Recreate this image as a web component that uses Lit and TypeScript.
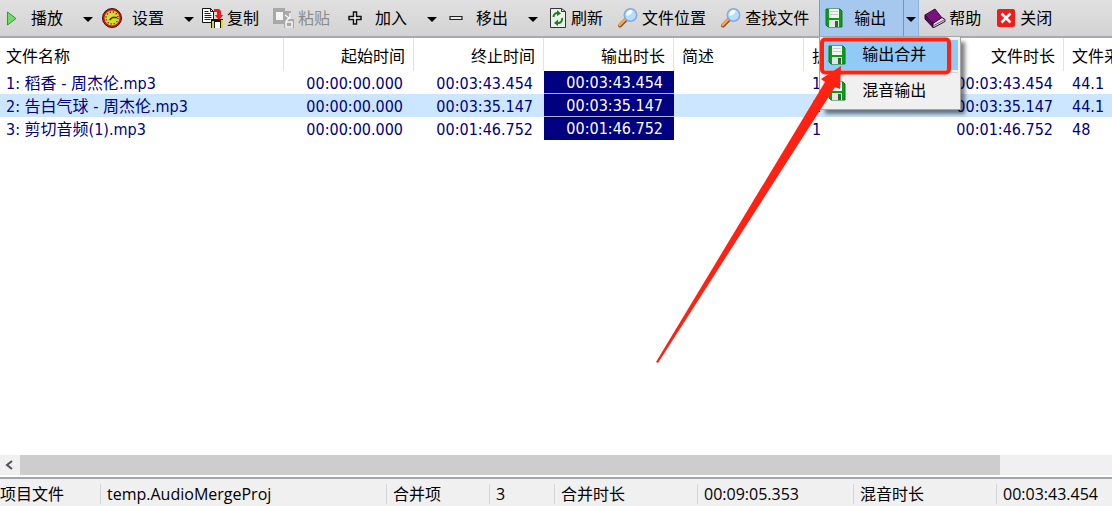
import { LitElement, html, svg, css } from "lit";
import { customElement } from "lit/decorators.js";
import { classMap } from "lit/directives/class-map.js";

const icon = (body: unknown, w = 22, h = 20) =>
  html`<svg class="icon" width=${w} height=${h} viewBox="0 0 ${w} ${h}" aria-hidden="true">${body}</svg>`;

const saveBody = svg`
  <path d="M3 1h14l2 2v16H5l-2-2z" fill="#0f9a1c"/>
  <path d="M3 1h14l2 2v16H5l-2-2z" fill="none" stroke="#0b7a14"/>
  <rect x="6" y="1" width="10" height="9" fill="#f4f4f4"/>
  <path d="M7 3.500h8M7 6.500h8" stroke="#c8c8c8"/>
  <rect x="6" y="12" width="10" height="7" fill="#e4e4ea"/>
  <rect x="12" y="13" width="3" height="6" fill="#2a6a2c"/>`;

const magBody = svg`
  <path d="M3 17.500l5.500-5.500" stroke="#8a5030" stroke-width="4" stroke-linecap="round"/>
  <path d="M2.500 17l5.500-5.500" stroke="#f7a64a" stroke-width="2.500" stroke-linecap="round"/>
  <circle cx="13.500" cy="7" r="6.200" fill="#b4dffa" stroke="#8aa6dc" stroke-width="1.500"/>
  <path d="M9.500 8a4.500 4.500 0 0 1 6-5.500c0 3-3 5-6 5.500z" fill="#f4fbff"/>`;

const icons: Record<string, unknown> = {
  play: svg`<path d="M7.500 4l8.500 6.500-8.500 6.500z" fill="#6fdc66" stroke="#23a02a"/>`,
  clock: svg`
    <circle cx="11" cy="10" r="8.500" fill="#dede1e" stroke="#e01010" stroke-width="2"/>
    <circle cx="11" cy="10" r="9.500" fill="none" stroke="#3a1010" stroke-width="1"/>
    <circle cx="11" cy="10" r="6" fill="none" stroke="#3434a0" stroke-width="1.500" stroke-dasharray="1.200 1.950"/>
    <path d="M16 9.500h-4.500l-3 2.500" fill="none" stroke="#30300a" stroke-width="1.500"/>`,
  copy: svg`
    <path d="M.500 .500h8l3 3v11h-11z" fill="#fff" stroke="#111"/>
    <path d="M8.500 .500v3h3" fill="none" stroke="#111"/>
    <path d="M2.500 3.500h4M2.500 5.500h6M2.500 7.500h7M2.500 9.500h7M2.500 11.500h6" stroke="#222"/>
    <path d="M12 1h5l2 2v4h2l-4 5-4-5h2V4h-3z" fill="#f01818"/>
    <path d="M9 11h12v9H9z" fill="#181808"/>
    <path d="M10 13h2v7h-2zM19 12h2v8h-2z" fill="#e0d820"/>
    <path d="M13 14h5v6h-5z" fill="#fff"/>
    <path d="M13 7h8l-4 5z" fill="#f01818"/>`,
  paste: svg`
    <path d="M0 0h12v3h6v8h3v9H11v-4H0z" fill="#a8a8a8"/>
    <path d="M3 4h7v8H3z" fill="#f4f4f4"/>
    <path d="M12 7l4 3-3 3M17 5v6M13 14v5h6v-5z" fill="none" stroke="#f8f8f8" stroke-width="1.500"/>`,
  plus: svg`<path d="M9.500 4h3v4.500h4.500v3h-4.500v4.500h-3v-4.500h-4.500v-3h4.500z" fill="#fff" stroke="#111" stroke-width="1.500"/>`,
  minus: svg`<path d="M5 8.500h12v3h-12z" fill="#e8e8e8" stroke="#222" stroke-width="1.200"/>`,
  refresh: svg`
    <path d="M4.500 .500h11l4 3v16h-15z" fill="#e8f2e8" stroke="#333"/>
    <path d="M15.500 .500v3h4" fill="none" stroke="#333"/>
    <path d="M7.500 9a4 4 0 0 1 4-4M16 10a4 4 0 0 1-4 5" fill="none" stroke="#1b7f22" stroke-width="2"/>
    <path d="M11 2l4 3.500-4 2.500zM12 11.500l-4 3.500 4 3z" fill="#1b7f22"/>`,
  mag: magBody,
  save: saveBody,
  book: svg`
    <path d="M1 7l10-6 7 9-9 6z" fill="#7d1080" stroke="#3b063d"/>
    <path d="M1 7v4l8 8.500v-4z" fill="#5a0a5e" stroke="#2b042d"/>
    <path d="M9 15.500l9-6 3 2v2l-12 6.500z" fill="#e8e0e8" stroke="#2b042d"/>
    <path d="M10 17.500l10-5.500" stroke="#555"/>`,
  close: svg`
    <rect x="2" y="1" width="18" height="18" rx="2" fill="#ee1c1c"/>
    <path d="M6.500 5.500l9 9M15.500 5.500l-9 9" stroke="#fff" stroke-width="2.500"/>`,
};

interface Tool { icon: string; label: string; split?: boolean; disabled?: boolean; open?: boolean }

const tools: Tool[] = [
  { icon: "play", label: "播放", split: true },
  { icon: "clock", label: "设置", split: true },
  { icon: "copy", label: "复制" },
  { icon: "paste", label: "粘贴", disabled: true },
  { icon: "plus", label: "加入", split: true },
  { icon: "minus", label: "移出", split: true },
  { icon: "refresh", label: "刷新" },
  { icon: "mag", label: "文件位置" },
  { icon: "mag", label: "查找文件" },
  { icon: "save", label: "输出", split: true, open: true },
  { icon: "book", label: "帮助" },
  { icon: "close", label: "关闭" },
];

const columns = [
  { label: "文件名称", num: false },
  { label: "起始时间", num: true },
  { label: "终止时间", num: true },
  { label: "输出时长", num: true },
  { label: "简述", num: false },
  { label: "折", num: false },
  { label: "文件时长", num: true },
  { label: "文件采", num: false },
];

const rows = [
  ["1: 稻香 - 周杰伦.mp3", "00:00:00.000", "00:03:43.454", "00:03:43.454", "", "1", "00:03:43.454", "44.1"],
  ["2: 告白气球 - 周杰伦.mp3", "00:00:00.000", "00:03:35.147", "00:03:35.147", "", "1", "00:03:35.147", "44.1"],
  ["3: 剪切音频(1).mp3", "00:00:00.000", "00:01:46.752", "00:01:46.752", "", "1", "00:01:46.752", "48"],
];

@customElement("tool-bar")
class ToolBar extends LitElement {
  static styles = css`
    :host { display: flex; gap: 1px; height: 36px; border-bottom: 2px solid #a9a9b1;
      background: linear-gradient(#e0e0e0, #d3d3d3); }
    button { border: 0; margin: 0; background: none; color: #000; font: inherit; text-align: left; white-space: nowrap; }
    .icon { flex: none; display: block; }
    .tool { display: flex; flex: none; position: relative; }
    .main { display: flex; align-items: center; gap: 3px; padding: 0 9px 0 4px; }
    .main span { padding-top: 2px; }
    .split .main { gap: 9px; padding: 0 17px 0 4px; }
    .tool:first-child .main { padding-left: 0; }
    .main:disabled { color: #8c8c8c; }
    .drop { width: 16px; padding: 2px 0 0; display: grid; place-items: center; }
    .open { background: #a6c8ee; box-shadow: inset 1px 0 #6aa0dc; }
    .open .drop { box-shadow: inset 1px 0 #5b9be0, inset -1px 0 #8ab4e4; }
    .menu { position: absolute; z-index: 2; top: 36px; left: 0; width: 142px; box-sizing: border-box;
      padding: 3px 2px; border: 1px solid #a5a5a5; background: #f0f0f0; box-shadow: 5px 5px 4px -1px #00000080; }
    .item { display: flex; align-items: center; gap: 14px; width: 100%; height: 30px; padding: 0 4px; }
    .item.current { background: #91c9f7; }
    .rule { height: 1px; margin: 2px 0 3px 34px; background: #d4d4d4; }
  `;
  render() {
    return tools.map((t) => html`
      <div class=${classMap({ tool: true, split: !!t.split, open: !!t.open })}>
        <button class="main" ?disabled=${t.disabled}>${icon(icons[t.icon])}<span>${t.label}</span></button>
        ${t.split ? html`<button class="drop" aria-label="${t.label} ▾">
          <svg width="10" height="5" viewBox="0 0 10 5"><path d="M0 0h10L5 5z" fill="#000"/></svg></button>` : ""}
        ${t.open ? html`<div class="menu" role="menu">
          <button class="item current" role="menuitem">${icon(icons.save)}<span>输出合并</span></button>
          <div class="rule"></div>
          <button class="item" role="menuitem">${icon(icons.save)}<span>混音输出</span></button>
        </div>` : ""}
      </div>`);
  }
}

@customElement("track-list")
class TrackList extends LitElement {
  static styles = css`
    :host { display: block; overflow: hidden; background: #fff; }
    table { border-collapse: separate; border-spacing: 0; table-layout: fixed; width: 1194px; }
    .name { width: 284px; }
    th, td { box-sizing: border-box; padding: 0 8px; font-weight: 400; text-align: left; white-space: nowrap; overflow: hidden; }
    th { height: 33px; border-right: 1px solid #e3e3e3; padding-top: 4px; }
    td { height: 23px; line-height: 21px; padding-top: 2px; padding-right: 11px; color: #000080; }
    th:first-child, td:first-child { padding-left: 6px; }
    .num { text-align: right; }
    .selected td { background: #cce6ff; }
    .length, .selected .length { background: #000080; color: #fff; border-bottom: 1px solid #b4b4c8; line-height: 20px; }
    tr:last-child .length { border-bottom-color: #000080; }
  `;
  render() {
    return html`<table>
      <colgroup><col class="name">${columns.slice(1).map(() => html`<col>`)}</colgroup>
      <thead><tr>${columns.map((c) => html`<th scope="col" class=${classMap({ num: c.num })}>${c.label}</th>`)}</tr></thead>
      <tbody>${rows.map((r, i) => html`<tr class=${classMap({ selected: i === 1 })}>
        ${r.map((v, j) => html`<td class=${classMap({ num: columns[j].num, length: j === 3 })}>${v}</td>`)}</tr>`)}</tbody>
    </table>`;
  }
}

@customElement("app-root")
class AppRoot extends LitElement {
  static styles = css`
    :host { display: flex; flex-direction: column; position: relative; min-height: 100vh; overflow: hidden;
      background: #fff; color: #000; font: 16px/20px "DejaVu Sans Condensed", "Noto Sans CJK SC", sans-serif; }
    track-list { flex: 1; }
    .scroll { display: flex; height: 20px; margin-bottom: 2px; background: #f0f0f0; }
    .back { width: 20px; padding: 0 3px 0 0; border: 0; background: none; display: grid; place-items: center; }
    .thumb { width: calc(90% - 21px); background: #cdcdcd; }
    .status { display: grid; align-items: center; box-sizing: border-box; height: 29px; padding-top: 2px;
      grid-template-columns: 101fr 286fr 103fr 65fr 143fr 156fr 143fr 115fr;
      border-top: 2px solid #a3a5ad; background: #f0f0f0;
      font-family: "Open Sans", "Noto Sans CJK SC", sans-serif; white-space: nowrap; overflow: hidden; }
    .cell { box-sizing: border-box; min-width: 0; padding-left: 6px; border-right: 1px solid #d5d5d5; }
    .cell:first-child { padding-left: 0; }
    .cell:last-child { border-right: 0; }
    .mark { position: absolute; z-index: 3; top: 36px; left: 650px; pointer-events: none; }
  `;
  render() {
    return html`
      <tool-bar role="toolbar"></tool-bar>
      <track-list></track-list>
      <div class="scroll">
        <button class="back" aria-label="◂"><svg width="8" height="10" viewBox="0 0 8 10"><path d="M7 1L2 5l5 4" fill="none" stroke="#505050" stroke-width="2"/></svg></button>
        <div class="thumb"></div>
      </div>
      <footer class="status">
        <span class="cell">项目文件</span><span class="cell">temp.AudioMergeProj</span>
        <span class="cell">合并项</span><span class="cell">3</span>
        <span class="cell">合并时长</span><span class="cell">00:09:05.353</span>
        <span class="cell">混音时长</span><span class="cell">00:03:43.454</span>
      </footer>
      <svg class="mark" width="302" height="330" viewBox="650 36 302 330" aria-hidden="true">
        <rect x="822" y="39.500" width="127" height="33" rx="3" fill="none" stroke="#ff2213" stroke-width="4"/>
        <path d="M656 362L825 82L821 79L841 66L840 89L835 87L658 363z" fill="#ff2213"/>
      </svg>`;
  }
}
